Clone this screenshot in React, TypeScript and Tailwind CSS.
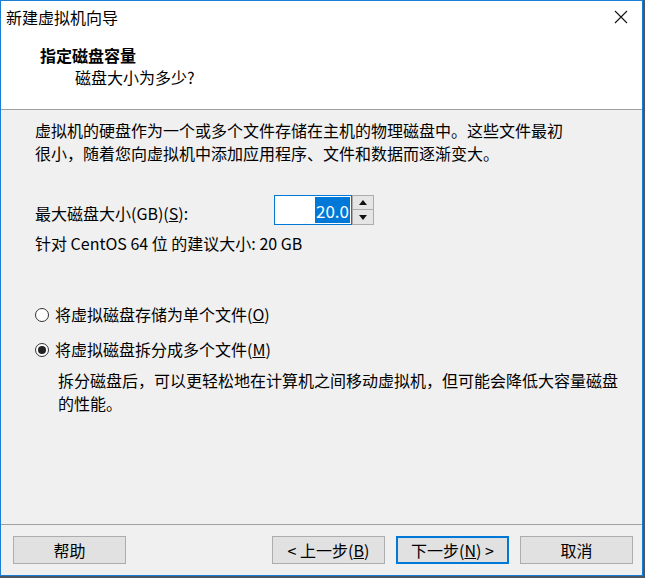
const font = { fontFamily: '"Noto Sans CJK SC", "Noto Sans", sans-serif' };

const Radio = ({ checked }: { checked?: boolean }) => (
  <span className="w-[14px] h-[14px] rounded-full border border-[#333333] bg-white flex items-center justify-center shrink-0">
    {checked && <span className="w-[8px] h-[8px] rounded-full bg-[#222222]" />}
  </span>
);

const Btn = ({
  children,
  primary,
}: {
  children: React.ReactNode;
  primary?: boolean;
}) => (
  <button
    className={
      primary
        ? 'w-[113px] h-[28px] bg-[#e1e1e1] border-2 border-[#0078d7] text-[16px] leading-none text-black flex items-center justify-center'
        : 'w-[113px] h-[28px] bg-[#e1e1e1] border border-[#adadad] text-[16px] leading-none text-black flex items-center justify-center'
    }
  >
    {children}
  </button>
);

const App = () => {
  return (
    <div className="w-full h-[578px] bg-[#4b5664]" style={font}>
      <div className="w-[643px] h-[576px] border border-[#1a7fd4] flex flex-col bg-[#f0f0f0] text-black">
        {/* title + header */}
        <div className="h-[109px] bg-white border-b border-[#a0a0a0] flex flex-col">
          <div className="h-[31px] flex items-center pl-[5px] pr-[14px]">
            <span className="text-[16px] leading-[22px]">新建虚拟机向导</span>
            <svg className="ml-auto" width="14" height="14" viewBox="0 0 14 14" aria-hidden="true">
              <path d="M1 1 L13 13 M13 1 L1 13" stroke="#111" strokeWidth="1.1" fill="none" />
            </svg>
          </div>
          <div className="pt-[12px] pl-[39px] text-[16px] leading-[22px]">
            <div className="font-bold">指定磁盘容量</div>
            <div className="pl-[35px]">磁盘大小为多少?</div>
          </div>
        </div>

        {/* body */}
        <div className="h-[414px] pl-[34px] pt-[9px] text-[16px] leading-[23px]">
          <p>
            虚拟机的硬盘作为一个或多个文件存储在主机的物理磁盘中。这些文件最初
            <br />
            很小，随着您向虚拟机中添加应用程序、文件和数据而逐渐变大。
          </p>

          <div className="mt-[30px] flex items-start">
            <span className="w-[239px] mt-[7px]">
              最大磁盘大小(GB)(<span className="underline">S</span>):
            </span>
            <div className="flex">
              <div className="w-[78px] h-[30px] bg-white border border-[#0078d7] flex justify-end items-stretch py-[1px] pr-[1px]">
                <span className="bg-[#0078d7] text-white text-[17px] leading-none flex items-center px-[1px]">
                  20.0
                </span>
              </div>
              <div className="w-[22px] h-[30px] flex flex-col">
                <div className="h-[15px] bg-[#e5e5e5] border border-[#acacac] flex items-center justify-center">
                  <svg width="8" height="5" viewBox="0 0 8 5" aria-hidden="true">
                    <path d="M0 5 L4 0 L8 5 Z" fill="#111" />
                  </svg>
                </div>
                <div className="h-[15px] bg-[#e5e5e5] border border-t-0 border-[#acacac] flex items-center justify-center">
                  <svg width="8" height="5" viewBox="0 0 8 5" aria-hidden="true">
                    <path d="M0 0 L8 0 L4 5 Z" fill="#111" />
                  </svg>
                </div>
              </div>
            </div>
          </div>

          <p className="mt-[7px]">针对 CentOS 64 位 的建议大小: 20 GB</p>

          <label className="mt-[48px] flex items-center gap-[6px]">
            <Radio />
            <span>
              将虚拟磁盘存储为单个文件(<span className="underline">O</span>)
            </span>
          </label>

          <label className="mt-[12px] flex items-center gap-[6px]">
            <Radio checked />
            <span>
              将虚拟磁盘拆分成多个文件(<span className="underline">M</span>)
            </span>
          </label>

          <p className="mt-[8px] pl-[23px]">
            拆分磁盘后，可以更轻松地在计算机之间移动虚拟机，但可能会降低大容量磁盘
            <br />
            的性能。
          </p>
        </div>

        {/* footer */}
        <div className="h-[51px] border-t border-[#a0a0a0] pt-[11px] pl-[12px] pr-[9px] flex items-start">
          <Btn>帮助</Btn>
          <div className="ml-auto flex gap-[11px]">
            <div className="flex gap-[11px]">
              <Btn>
                &lt; 上一步(<span className="underline">B</span>)
              </Btn>
              <Btn primary>
                下一步(<span className="underline">N</span>) &gt;
              </Btn>
            </div>
            <Btn>取消</Btn>
          </div>
        </div>
      </div>
    </div>
  );
};

export default App;
